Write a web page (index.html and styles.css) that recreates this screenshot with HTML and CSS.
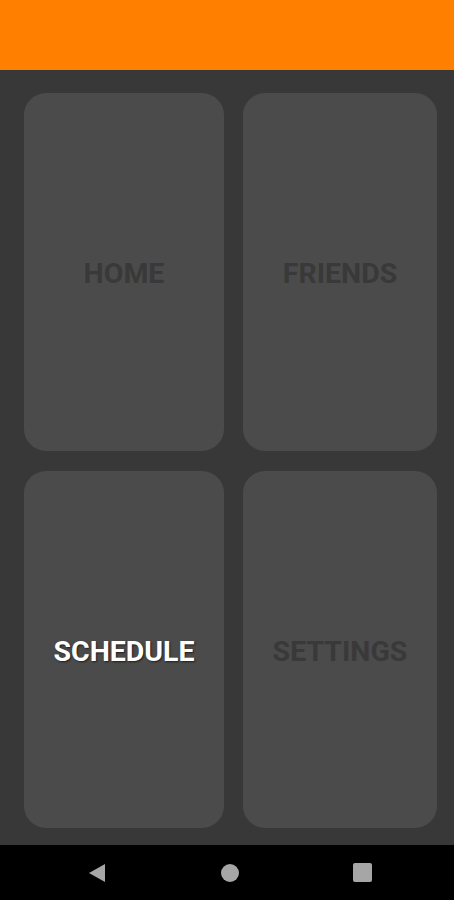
FILE: index.html
```html
<!DOCTYPE html>
<html>
<head>
<meta charset="utf-8">
<link rel="stylesheet" href="styles.css">
</head>
<body>
<div class="app">
  <header class="topbar"></header>
  <main class="grid">
    <div class="card"><span class="label">HOME</span></div>
    <div class="card"><span class="label">FRIENDS</span></div>
    <div class="card"><span class="label active">SCHEDULE</span></div>
    <div class="card"><span class="label">SETTINGS</span></div>
  </main>
  <nav class="navbar">
    <svg class="nav-icon" width="18" height="20" viewBox="0 0 18 20"><polygon points="17,1 17,19 1,10" fill="#a6a6a6"/></svg>
    <svg class="nav-icon" width="18" height="18" viewBox="0 0 18 18"><circle cx="9" cy="9" r="9" fill="#a6a6a6"/></svg>
    <svg class="nav-icon" width="19" height="19" viewBox="0 0 19 19"><rect x="0" y="0" width="19" height="19" rx="2" fill="#a6a6a6"/></svg>
  </nav>
</div>
</body>
</html>
```
FILE: styles.css
```css
html, body {
  margin: 0;
  padding: 0;
  background: #393939;
}
.app {
  width: 454px;
  height: 900px;
  display: flex;
  flex-direction: column;
  font-family: Roboto, "Liberation Sans", sans-serif;
}
.topbar {
  height: 70px;
  background: #ff7f00;
  box-shadow: 0 1px 2px rgba(0,0,0,0.5);
  flex: none;
}
.grid {
  flex: 1;
  display: grid;
  grid-template-columns: 200px 194px;
  grid-template-rows: 358px 357px;
  column-gap: 19px;
  row-gap: 20px;
  padding: 23px 0 0 24px;
  background: #383838;
}
.card {
  background: #4b4b4b;
  border-radius: 22px;
  display: flex;
  align-items: center;
  justify-content: center;
  padding-top: 3px;
}
.label {
  font-size: 28.5px;
  font-weight: 700;
  color: #393939;
}
.label.active {
  color: #ffffff;
  text-shadow: 1px 1px 2px rgba(0,0,0,0.6);
}
.navbar {
  height: 55px;
  flex: none;
  background: #000;
  display: grid;
  grid-template-columns: 133px 133px 133px;
  align-items: center;
  justify-items: center;
  padding: 0 0 0 30px;
}
.nav-icon {
  display: block;
}
```
